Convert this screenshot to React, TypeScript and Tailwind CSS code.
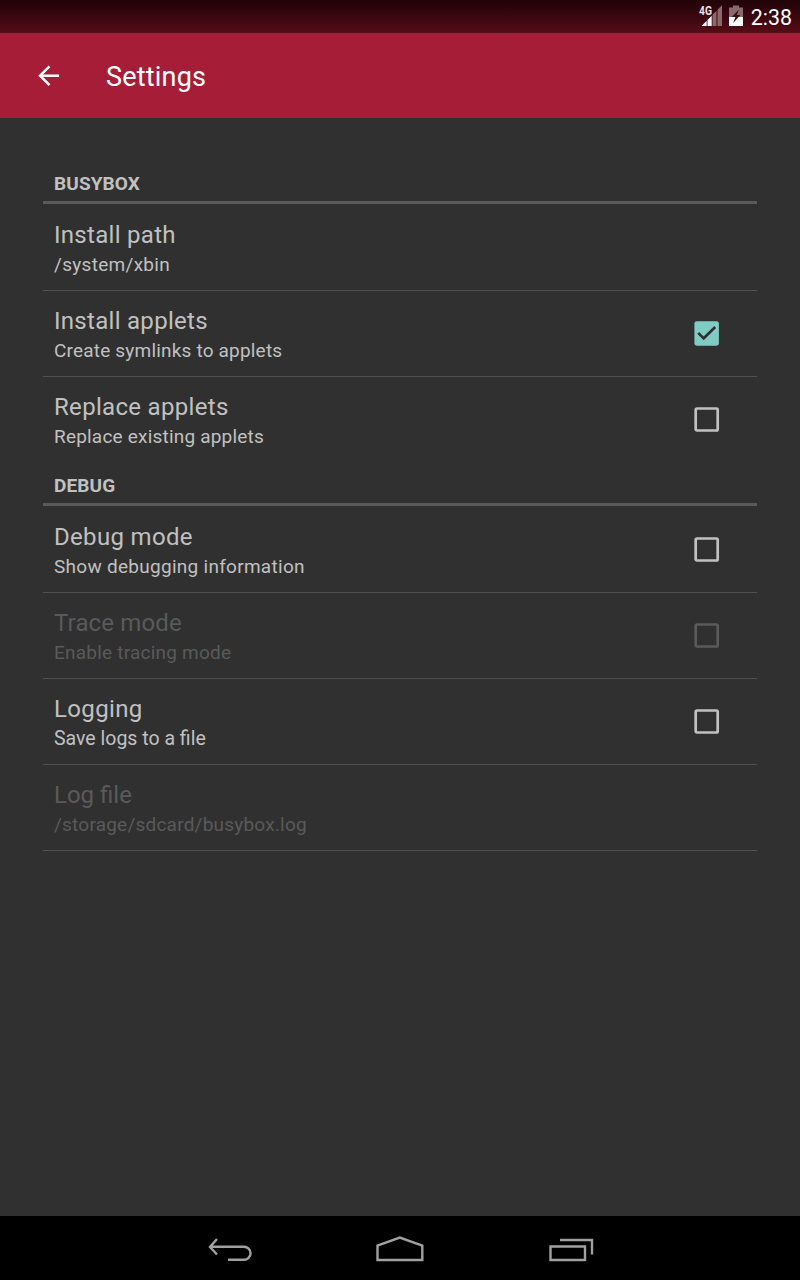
import React from "react";

type CheckState = "checked" | "unchecked";

function Checkbox({ state, disabled }: { state: CheckState; disabled?: boolean }) {
  return (
    <svg width="26" height="26" viewBox="0 0 26 26" fill="none" className="mb-px mr-[37px] shrink-0">
      {state === "checked" ? (
        <>
          <rect x="0.4" y="1.2" width="24.5" height="24.5" rx="2.4" fill="#80cbc4" />
          <path d="M4.2 12.800 9.700 18.300l11.500-11.300" stroke="#303030" strokeWidth="2.6" />
        </>
      ) : (
        <rect x="1.7" y="2.5" width="22" height="22" rx="1.2" stroke={disabled ? "#5a5a5a" : "#c1c1c1"} strokeWidth="2.7" />
      )}
    </svg>
  );
}

interface RowProps {
  title: string;
  titleClass?: string;
  summary: string;
  summaryClass?: string;
  check?: CheckState;
  disabled?: boolean;
  last?: boolean;
}

function Row({ title, titleClass = "", summary, summaryClass = "text-[19px]", check, disabled, last }: RowProps) {
  return (
    <div
      className={`flex h-[86px] items-center justify-between border-b pl-[11px] ${last ? "border-transparent" : "border-[#4f4f4f]"} ${disabled ? "text-[#5a5a5a]" : "text-[#c1c1c1]"}`}
    >
      <div className="pt-[3px]">
        <div className={`text-[24px] leading-[31px] ${titleClass}`}>{title}</div>
        <div className={`leading-[28px] ${summaryClass}`}>{summary}</div>
      </div>
      {check && <Checkbox state={check} disabled={disabled} />}
    </div>
  );
}

function SectionHeader({ label }: { label: string }) {
  return (
    <h2 className="mb-px flex h-[43px] items-center border-b-[3px] border-[#5a5a5a] pt-[7px] pl-[11px] text-[19px] font-bold tracking-[0.12px] text-[#c1c1c1]">
      {label}
    </h2>
  );
}

function StatusBar() {
  return (
    <div className="flex h-[33px] items-center justify-end bg-linear-to-b from-[#210308] to-[#560d17] pr-2">
      <svg width="52" height="33" viewBox="695 0 52 33" className="shrink-0">
        <path d="M717.500 9.800 722 5.300V26h-4.500zM712.500 14.800l4-4V26h-4z" fill="#8a686c" />
        <path d="M701.500 26l5.200-5.200V26zM707.500 20l4.200-4.200V26h-4.200z" fill="#fff" />
        <text x="699" y="15" fontSize="13" fontWeight="700" fontFamily="Roboto" fill="#e8e0e1" textLength="13" lengthAdjust="spacingAndGlyphs">4G</text>
        <path d="M733 5.500h6v2h4V17h-14V7.500h4z" fill="#88696c" />
        <path d="M729 17h14v9h-14z" fill="#fff" />
        <path d="M739 9.500l-7.200 7.500h3.600l-2.200 6 7.200-8h-3.600z" fill="#3d0b12" />
      </svg>
      <span className="ml-1 pt-[3px] text-[21.33px] leading-6 text-white">2:38</span>
    </div>
  );
}

function NavBar() {
  return (
    <nav className="h-16 bg-black">
      <svg width="800" height="64" viewBox="0 1216 800 64" fill="none" stroke="#a0a0a0" strokeWidth="2.4">
        <path d="M217 1239l-7 8 7 7.500M210 1246.700h34a6.500 6.500 0 0 1 0 13.100H228" />
        <path d="M377.500 1260v-14.500l22.300-8 22.500 8v14.500z" />
        <path d="M550.500 1246.500h34.500v13.500h-34.500zM560 1240h32v14.500" />
      </svg>
    </nav>
  );
}

export default function App() {
  return (
    <div className="flex h-[1280px] w-[800px] flex-col bg-[#303030] font-['Roboto',sans-serif]">
      <StatusBar />
      <header className="flex h-[85px] items-center bg-[#a51d37] text-white">
        <svg width="22" height="22" viewBox="0 0 22 22" fill="none" stroke="white" strokeWidth="2.5" className="ml-[38px]">
          <path d="M21 10.700H2M11.500 1.300 2 10.700l9.500 9.500" />
        </svg>
        <h1 className="ml-[46px] pt-[3px] text-[27px] tracking-[0.2px]">Settings</h1>
      </header>
      <main className="flex-1 px-[43px] pt-[43px]">
        <SectionHeader label="BUSYBOX" />
        <Row title="Install path" titleClass="tracking-[0.29px]" summary="/system/xbin" summaryClass="text-[19px] tracking-[0.3px]" />
        <Row title="Install applets" titleClass="tracking-[0.29px]" summary="Create symlinks to applets" summaryClass="text-[19px] tracking-[0.19px]" check="checked" />
        <Row title="Replace applets" titleClass="tracking-[0.31px]" summary="Replace existing applets" summaryClass="text-[19px] tracking-[0.2px]" check="unchecked" last />
        <SectionHeader label="DEBUG" />
        <Row title="Debug mode" titleClass="tracking-[0.32px]" summary="Show debugging information" summaryClass="text-[19px] tracking-[0.28px]" check="unchecked" />
        <Row title="Trace mode" titleClass="tracking-[0.15px]" summary="Enable tracing mode" summaryClass="text-[19px] tracking-[0.22px]" check="unchecked" disabled />
        <Row title="Logging" titleClass="tracking-[0.35px]" summary="Save logs to a file" summaryClass="text-[19.5px]" check="unchecked" />
        <Row title="Log file" summary="/storage/sdcard/busybox.log" summaryClass="text-[19px] tracking-[0.22px]" disabled />
      </main>
      <NavBar />
    </div>
  );
}
